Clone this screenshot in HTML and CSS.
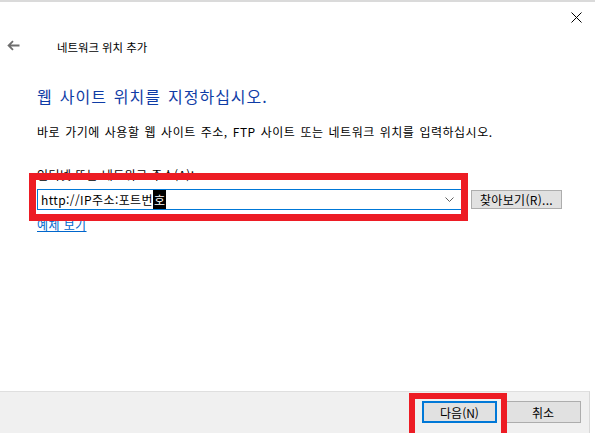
FILE: index.html
```html
<!DOCTYPE html>
<html lang="ko">
<head>
    <meta charset="UTF-8">
    <title>네트워크 위치 추가</title>
    <link rel="stylesheet" href="styles.css">
</head>
<body>
<div class="window">
    <!-- Title bar -->
    <div class="titlebar">
        <svg class="close" width="11" height="11" viewBox="0 0 11 11">
            <path d="M0.5 0.5 L10.5 10.5 M10.5 0.5 L0.5 10.5" stroke="#000" stroke-width="1" fill="none"/>
        </svg>
    </div>

    <div class="nav">
        <svg class="back" width="13" height="11" viewBox="0 0 13 11">
            <path d="M12.5 5.5 H1.8 M6 1.2 L1.6 5.5 L6 9.8" stroke="#6e6e6e" stroke-width="1.8" fill="none"/>
        </svg>
        <span class="nav-title">네트워크 위치 추가</span>
    </div>

    <div class="main">
        <h1 class="instruction">웹 사이트 위치를 지정하십시오.</h1>
        <p class="desc">바로 가기에 사용할 웹 사이트 주소, FTP 사이트 또는 네트워크 위치를 입력하십시오.</p>

        <label class="field-label">인터넷 또는 네트워크 주소(A):</label>
        <div class="field-row">
            <div class="combo">
                <span class="combo-text">http://IP주소:포트번<span class="ime">호</span></span>
                <svg class="chevron" width="9" height="5" viewBox="0 0 9 5">
                    <path d="M0.5 0.5 L4.5 4.5 L8.5 0.5" stroke="#606060" stroke-width="1" fill="none"/>
                </svg>
            </div>
            <button class="btn btn-browse">찾아보기(R)...</button>
        </div>
        <a class="example-link" href="#">예제 보기</a>
    </div>

    <!-- Footer -->
    <div class="footer">
        <button class="btn btn-default">다음(N)</button>
        <button class="btn">취소</button>
    </div>

    <!-- red annotation boxes -->
    <div class="mark mark-field"></div>
    <div class="mark mark-next"></div>
</div>
</body>
</html>
```

FILE: styles.css
```css
/* General */
body {
    margin: 0;
    padding: 0;
    background: #fff;
    font-family: "Noto Sans CJK KR", "Noto Sans", sans-serif;
    font-size: 12px;
    color: #000;
}

.window {
    position: relative;
    width: 595px;
    height: 433px;
    display: flex;
    flex-direction: column;
    background: #fff;
    overflow: hidden;
}

/* Title bar */
.titlebar {
    height: 36px;
    box-sizing: border-box;
    border-top: 2px solid #dadada;
    padding: 10px 13px 0 0;
    display: flex;
    justify-content: flex-end;
    align-items: flex-start;
}

.nav {
    height: 20px;
    display: flex;
    align-items: center;
    padding-left: 7px;
}

.back {
    margin-right: 37px;
    margin-top: -2px;
}

.nav-title {
    font-size: 11.4px;
    line-height: 20px;
    padding-top: 2px;
}

/* Content */
.main {
    padding-left: 37px;
    display: flex;
    flex-direction: column;
    align-items: flex-start;
    flex: 1;
}

.instruction {
    margin: 29px 0 0 0;
    font-size: 16px;
    line-height: 22px;
    font-weight: normal;
    color: #0f3ca6;
    letter-spacing: 1px;
    word-spacing: 1.5px;
}

.desc {
    margin: 17px 0 0 0;
    line-height: 16px;
    letter-spacing: 0.5px;
    word-spacing: 1.2px;
}

.field-label {
    margin-top: 27px;
    line-height: 16px;
    letter-spacing: 0.4px;
}

.field-row {
    margin-top: 6px;
    display: flex;
    align-items: center;
    gap: 9px;
}

.combo {
    width: 425px;
    height: 21px;
    box-sizing: border-box;
    border: 1px solid #0078d7;
    display: flex;
    align-items: center;
    justify-content: space-between;
    padding: 0 7px 0 3px;
}

.combo-text {
    line-height: 16px;
    letter-spacing: 0.4px;
}

.ime {
    background: #000;
    color: #fff;
    padding: 1px 1px;
}

.btn {
    font-family: inherit;
    font-size: 12px;
    height: 22px;
    width: 76px;
    background: #e1e1e1;
    border: 1px solid #adadad;
    padding: 0;
    color: #000;
}

.btn-browse {
    width: 91px;
    height: 19px;
    line-height: 16px;
    letter-spacing: 0.3px;
}

.example-link {
    margin-top: 7px;
    line-height: 16px;
    color: #0066cc;
    text-decoration: underline;
    letter-spacing: 0.4px;
}

/* Footer */
.footer {
    height: 42px;
    margin-right: 5px;
    box-sizing: border-box;
    background: #f0f0f0;
    border-top: 1px solid #dfdfdf;
    border-right: 1px solid #d8d8d8;
    display: flex;
    justify-content: flex-end;
    gap: 8px;
    padding: 9px 8px 0 0;
    align-items: flex-start;
}

.btn-default {
    width: 75px;
    border: 2px solid #0078d7;
}

/* Red annotation boxes */
.mark {
    position: absolute;
    border: 7px solid #ed1c24;
    box-sizing: border-box;
}

.mark-field {
    left: 29px;
    top: 173px;
    width: 439px;
    height: 48px;
}

.mark-next {
    left: 409px;
    top: 393px;
    width: 98px;
    height: 50px;
    border-width: 6px;
}
```
